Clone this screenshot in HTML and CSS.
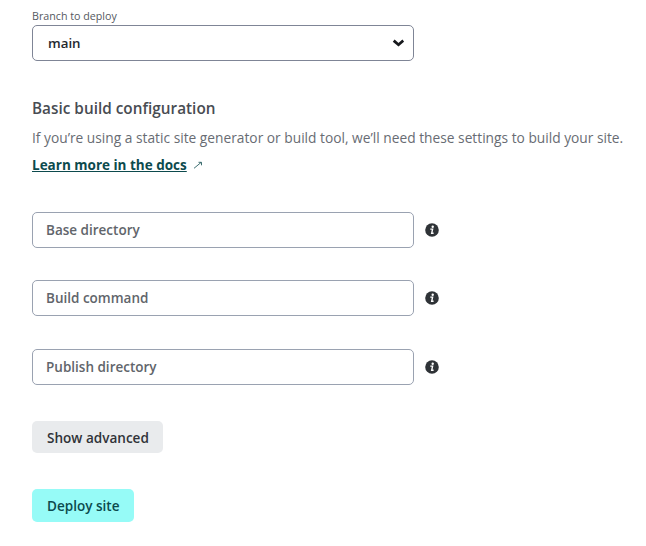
FILE: index.html
```html
<!DOCTYPE html>
<html lang="en">
<head>
<meta charset="utf-8">
<title>Deploy site</title>
<link rel="stylesheet" href="styles.css">
</head>
<body>
<svg class="defs" width="0" height="0"><symbol id="info" viewBox="0 0 14 14"><circle cx="7" cy="7" r="6.8" fill="#2f3337"/><circle cx="7.700" cy="3.700" r="1.200" fill="#fff"/><path d="M5.300 6.100h2.300L6.700 10.200h1.900" fill="none" stroke="#fff" stroke-width="1.400"/></symbol></svg>
<main class="form">
  <label class="label" for="branch"><span class="text t-branch">Branch to deploy</span></label>
  <div class="field select" id="branch"><span class="text t-main">main</span><svg class="chevron" width="12" height="8" viewBox="0 0 12 8"><path d="M1.700 1.600 6.500 5.700l4.800-4.100" fill="none" stroke="#17191c" stroke-width="2.800"/></svg></div>
  <h2 class="heading"><span class="text t-heading">Basic build configuration</span></h2>
  <p class="copy"><span class="text t-copy">If you’re using a static site generator or build tool, we’ll need these settings to build your site.</span></p>
  <p class="docs"><a class="text t-docs">Learn more in the docs</a><svg class="arrow" width="10" height="10" viewBox="0 0 10 10"><path d="M1 8.300 8 2.500M5.500 2.300h3v3" fill="none" stroke="#0c4a4d" stroke-width=".8"/></svg></p>
  <div class="row base"><div class="field"><span class="text t-base">Base directory</span></div><svg class="info"><use href="#info"/></svg></div>
  <div class="row build"><div class="field"><span class="text t-build">Build command</span></div><svg class="info"><use href="#info"/></svg></div>
  <div class="row publish"><div class="field"><span class="text t-publish">Publish directory</span></div><svg class="info"><use href="#info"/></svg></div>
  <button class="button advanced"><span class="text t-advanced">Show advanced</span></button>
  <button class="button deploy"><span class="text t-deploy">Deploy site</span></button>
</main>
</body>
</html>
```

FILE: styles.css
```css
* { box-sizing: border-box; }
body { margin: 0; background: #fff; color: #40444a; font-family: "Open Sans", "Noto Sans", sans-serif; }
.defs { display: none; }
.form { display: flex; flex-direction: column; align-items: flex-start; padding: 8px 0 0 32px; }
.text { white-space: nowrap; }
.label { height: 17px; font-size: 10.7px; line-height: 16px; color: #555961; }
.field { width: 382px; height: 36px; border: 1px solid #9aa2b1; border-radius: 5px; display: flex; align-items: center; padding: 0 13px 1px; font-size: 13.5px; font-weight: 600; color: #61656b; }
.select { justify-content: space-between; padding: 0 9px 1px 15px; border-color: #7f8596; color: #24282e; }
.t-main { font-size: 13.3px; }
.heading { margin: 35px 0 0; height: 24px; line-height: 24px; font-size: 15.3px; font-weight: 600; color: #484c52; }
.t-heading { letter-spacing: .02px; }
.copy { margin: 6px 0 0; height: 24px; line-height: 24px; font-size: 13.76px; color: #686c73; }
.docs { margin: 2px 0 0; height: 26px; line-height: 26px; font-size: 13.5px; font-weight: 700; color: #0c4a4d; display: flex; align-items: center; }
.t-docs { text-decoration: underline; }
.arrow { margin-left: 6px; }
.row { display: flex; align-items: center; gap: 11px; height: 36px; }
.info { width: 14px; height: 14px; }
.base { margin-top: 34px; }
.build { margin-top: 32px; }
.publish { margin-top: 33px; }
.button { border: 0; border-radius: 5px; height: 32px; padding: 1px 0 0 15px; text-align: left; font: 600 13.55px/32px "Open Sans", sans-serif; color: #303338; }
.advanced { width: 131px; margin-top: 36px; background: #e9ebed; }
.deploy { width: 102px; height: 33px; margin-top: 36px; background: #96fbf7; color: #0c4a4d; }
```
